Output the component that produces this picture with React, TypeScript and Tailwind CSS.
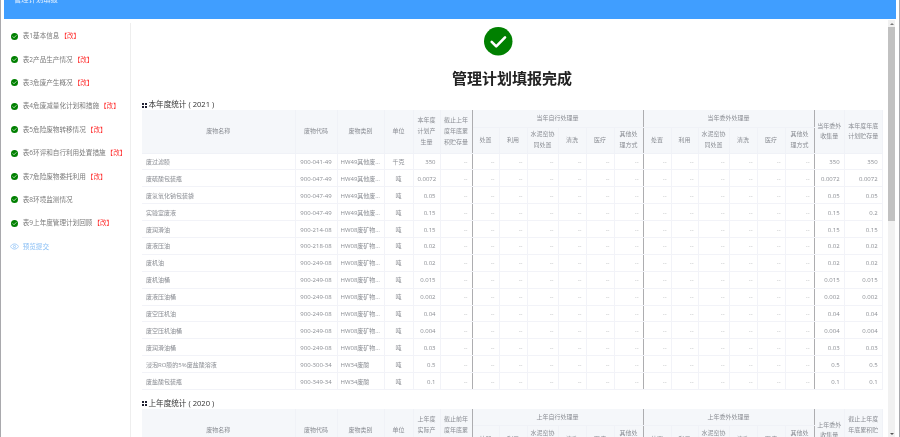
import React from 'react';

const font = { fontFamily: '"Open Sans", "Noto Sans CJK SC", sans-serif' };

const menu = [
  { name: '表1基本信息', edit: true },
  { name: '表2产品生产情况', edit: true },
  { name: '表3危废产生概况', edit: true },
  { name: '表4危废减量化计划和措施', edit: true },
  { name: '表5危险废物转移情况', edit: true },
  { name: '表6环评和自行利用处置措施', edit: true },
  { name: '表7危险废物委托利用', edit: true },
  { name: '表8环境监测情况', edit: false },
  { name: '表9上年度管理计划回顾', edit: true },
];

const HW49 = 'HW49其他废物';
const HW08 = 'HW08废矿物油';
const HW34 = 'HW34废酸';

const rows = [
  ['废过滤膜', '900-041-49', HW49, '千克', '350', '350', '350'],
  ['废硫酸包装瓶', '900-047-49', HW49, '吨', '0.0072', '0.0072', '0.0072'],
  ['废氢氧化钠包装袋', '900-047-49', HW49, '吨', '0.05', '0.05', '0.05'],
  ['实验室废液', '900-047-49', HW49, '吨', '0.15', '0.15', '0.2'],
  ['废润滑油', '900-214-08', HW08, '吨', '0.15', '0.15', '0.15'],
  ['废液压油', '900-218-08', HW08, '吨', '0.02', '0.02', '0.02'],
  ['废机油', '900-249-08', HW08, '吨', '0.02', '0.02', '0.02'],
  ['废机油桶', '900-249-08', HW08, '吨', '0.015', '0.015', '0.015'],
  ['废液压油桶', '900-249-08', HW08, '吨', '0.002', '0.002', '0.002'],
  ['废空压机油', '900-249-08', HW08, '吨', '0.04', '0.04', '0.04'],
  ['废空压机油桶', '900-249-08', HW08, '吨', '0.004', '0.004', '0.004'],
  ['废润滑油桶', '900-249-08', HW08, '吨', '0.03', '0.03', '0.03'],
  ['浸泡RO膜的5%废盐酸溶液', '900-300-34', HW34, '吨', '0.5', '0.5', '0.5'],
  ['废盐酸包装瓶', '900-349-34', HW34, '吨', '0.1', '0.1', '0.1'],
];

const widths = [153, 42, 47, 29, 27, 32, 27, 28, 31, 28, 28, 29, 28, 27, 31, 28, 28, 29, 30, 38];

const th = 'border-r border-b border-[#f0f2f7] font-normal text-center leading-[10.7px] px-0 align-middle whitespace-nowrap';
const td = 'border-r border-b border-[#f2f3f8] px-[4px] pt-[1px] pb-0 h-[16.9px] leading-[8px] whitespace-nowrap overflow-hidden';

const CheckIcon = ({ size }: { size: number }) => (
  <svg width={size} height={size} viewBox="0 0 24 24" className="shrink-0">
    <circle cx="12" cy="12" r="12" fill="#008000" />
    <path d="M6.5 12.5l3.8 3.8 7.4-7.6" fill="none" stroke="#fff" strokeWidth="2.2" strokeLinecap="round" strokeLinejoin="round" />
  </svg>
);

const SectionTitle = ({ text }: { text: string }) => (
  <div className="flex items-center h-[12px] pt-[2px] text-[7.6px] text-[#333] whitespace-pre">
    <span className="grid grid-cols-2 gap-[1px] w-[5px] mr-[1.5px]">
      <i className="h-[2px] bg-[#223]" />
      <i className="h-[2px] bg-[#223]" />
      <i className="h-[2px] bg-[#223]" />
      <i className="h-[2px] bg-[#223]" />
    </span>
    {text}
  </div>
);

type Labels = {
  produced: string[];
  stored: string[];
  own: string;
  out: string;
  collected: string[];
  planned: string[];
};

const StatTable = ({ labels }: { labels: Labels }) => {
  const sub = [['处置'], ['利用'], ['水泥窑协', '同处置'], ['清洗'], ['医疗'], ['其他处', '理方式']];
  const lines = (l: string[]) => l.map((t) => <div key={t}>{t}</div>);
  return (
    <table className="table-fixed border-collapse w-[740px] text-[6px] text-[#8b8e94]">
      <colgroup>
        {widths.map((w, i) => (
          <col key={i} style={{ width: w }} />
        ))}
      </colgroup>
      <thead className="bg-[#f5f7fa]">
        <tr className="h-[17px]">
          <th rowSpan={2} className={th}>废物名称</th>
          <th rowSpan={2} className={th}>废物代码</th>
          <th rowSpan={2} className={th}>废物类别</th>
          <th rowSpan={2} className={th}>单位</th>
          <th rowSpan={2} className={th}>{lines(labels.produced)}</th>
          <th rowSpan={2} className={`${th} border-r-[#adadb0]`}>{lines(labels.stored)}</th>
          <th colSpan={6} className={`${th} border-r-[#adadb0]`}>{labels.own}</th>
          <th colSpan={6} className={`${th} border-r-[#adadb0]`}>{labels.out}</th>
          <th rowSpan={2} className={th}>{lines(labels.collected)}</th>
          <th rowSpan={2} className={th}>{lines(labels.planned)}</th>
        </tr>
        <tr className="h-[26px]">
          {sub.map((s, i) => (
            <th key={i} className={i === 5 ? `${th} border-r-[#adadb0]` : th}>{lines(s)}</th>
          ))}
          {sub.map((s, i) => (
            <th key={i} className={i === 5 ? `${th} border-r-[#adadb0]` : th}>{lines(s)}</th>
          ))}
        </tr>
      </thead>
      <tbody>
        {rows.map((r, i) => (
          <tr key={i}>
            <td className={td}>{r[0]}</td>
            <td className={`${td} text-center`}>{r[1]}</td>
            <td className={`${td} !px-[3px] text-ellipsis`}>{r[2]}</td>
            <td className={`${td} text-center`}>{r[3]}</td>
            <td className={`${td} text-right`}>{r[4]}</td>
            {Array.from({ length: 13 }).map((_, j) => (
              <td
                key={j}
                className={
                  j === 0 || j === 6 || j === 12
                    ? `${td} text-right text-[#b5b7bb] border-r-[#adadb0]`
                    : `${td} text-right text-[#b5b7bb]`
                }
              >
                --
              </td>
            ))}
            <td className={`${td} text-right`}>{r[5]}</td>
            <td className={`${td} text-right`}>{r[6]}</td>
          </tr>
        ))}
      </tbody>
    </table>
  );
};

export default function App() {
  return (
    <div style={font} className="h-[437px] w-[900px] overflow-hidden bg-white flex flex-col pl-[3px] pr-[3px] border-x border-[#a9a9ad] blur-[0.3px]">
      <header className="h-[19px] shrink-0 bg-[#409eff] relative overflow-hidden">
        <div className="absolute left-[10px] -top-[4px] text-[7.3px] leading-[7px] text-[#e6f2ff]">管理计划填报</div>
      </header>
      <div className="flex flex-1 min-h-0 mt-[1px]">
        <aside className="w-[127px] shrink-0 mt-[3px] pt-[1.5px] border-r border-[#eeeeee]">
          {menu.map((m) => (
            <div key={m.name} className="h-[23.4px] flex items-center pl-[7px] text-[6.6px] text-[#7a7a7a] whitespace-nowrap">
              <CheckIcon size={7} />
              <span className="ml-[4.7px]">{m.name}</span>
              {m.edit && <span className="ml-[1px] text-[#f33]">【改】</span>}
            </div>
          ))}
          <div className="h-[23.4px] flex items-center pl-[6px] text-[6.6px] text-[#8cc0f5]">
            <svg width="9" height="9" viewBox="0 0 24 24" fill="none" stroke="#8cc0f5" strokeWidth="2">
              <path d="M1 12s4-7 11-7 11 7 11 7-4 7-11 7-11-7-11-7z" />
              <circle cx="12" cy="12" r="3" />
            </svg>
            <span className="ml-[3.7px]">预览提交</span>
          </div>
        </aside>
        <main className="flex-1 min-w-0 overflow-hidden pl-[11px] pt-[7px]">
          <div className="flex justify-center pr-[33px]">
            <CheckIcon size={28.5} />
          </div>
          <h1 className="text-[15px] leading-[20px] font-bold text-[#222] text-center mt-[12px] pr-[6px]">管理计划填报完成</h1>
          <div className="mt-[10.5px]">
            <SectionTitle text="本年度统计 ( 2021 )" />
            <StatTable
              labels={{
                produced: ['本年度', '计划产', '生量'],
                stored: ['截止上年', '度年底累', '积贮存量'],
                own: '当年自行处理量',
                out: '当年委外处理量',
                collected: ['当年委外', '收集量'],
                planned: ['本年度年底', '计划贮存量'],
              }}
            />
          </div>
          <div className="mt-[7px]">
            <SectionTitle text="上年度统计 ( 2020 )" />
            <StatTable
              labels={{
                produced: ['上年度', '实际产', '生量'],
                stored: ['截止前年', '度年底累', '积贮存量'],
                own: '上年自行处理量',
                out: '上年委外处理量',
                collected: ['上年委外', '收集量'],
                planned: ['截止上年度', '年底累积贮', '存量'],
              }}
            />
          </div>
        </main>
        <div className="w-[7px] mr-[1px] shrink-0 bg-[#f1f1f1] flex flex-col">
          <div className="h-[7px] flex items-center justify-center">
            <i className="border-x-[2px] border-x-transparent border-b-[2px] border-b-[#777]" />
          </div>
          <div className="h-[194px] bg-[#c1c1c1]" />
          <div className="flex-1" />
          <div className="h-[7px] flex items-center justify-center">
            <i className="border-x-[2px] border-x-transparent border-t-[2px] border-t-[#555]" />
          </div>
        </div>
      </div>
    </div>
  );
}
